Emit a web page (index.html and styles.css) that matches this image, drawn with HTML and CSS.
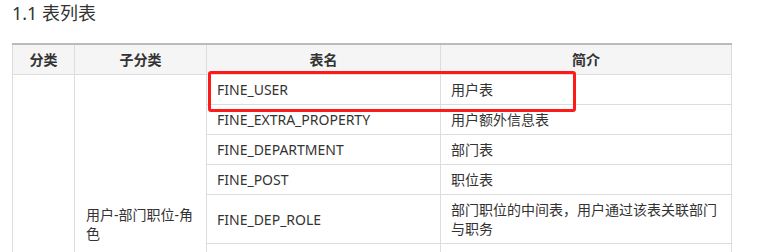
FILE: index.html
```html
<!DOCTYPE html>
<html lang="zh-CN">
<head>
<meta charset="utf-8">
<title>1.1 表列表</title>
<link rel="stylesheet" href="styles.css">
</head>
<body>
<div class="page">
  <h2 class="title">1.1 表列表</h2>
  <div class="table-wrap">
    <table class="tbl">
      <colgroup>
        <col class="c1"><col class="c2"><col class="c3"><col class="c4">
      </colgroup>
      <thead>
        <tr><th>分类</th><th>子分类</th><th>表名</th><th>简介</th></tr>
      </thead>
      <tbody>
        <tr>
          <td rowspan="12" class="cat"></td>
          <td rowspan="9" class="sub">用户-部门职位-角色</td>
          <td>FINE_USER</td><td>用户表</td>
        </tr>
        <tr><td>FINE_EXTRA_PROPERTY</td><td>用户额外信息表</td></tr>
        <tr><td>FINE_DEPARTMENT</td><td>部门表</td></tr>
        <tr><td>FINE_POST</td><td>职位表</td></tr>
        <tr><td>FINE_DEP_ROLE</td><td>部门职位的中间表，用户通过该表关联部门与职务</td></tr>
        <tr class="spaced"><td>FINE_USER_ROLE_MIDDLE</td><td>用户与角色的中间表</td></tr>
        <tr><td>FINE_CUSTOM_ROLE</td><td>自定义角色表</td></tr>
        <tr><td>FINE_SOFT_DATA</td><td>软删除数据表</td></tr>
        <tr><td>FINE_USER_ROLE</td><td>用户角色表</td></tr>
        <tr>
          <td rowspan="3" class="sub">权限</td>
          <td>FINE_AUTHORITY</td><td>权限表</td>
        </tr>
        <tr><td>FINE_AUTHORITY_OBJECT</td><td>权限实体表</td></tr>
        <tr><td>FINE_AUTH_PREFERENCE</td><td>权限偏好表</td></tr>
      </tbody>
    </table>
    <div class="highlight"></div>
  </div>
</div>
</body>
</html>
```
FILE: styles.css
```css
html, body {
  margin: 0;
  padding: 0;
  background: #ffffff;
}
body {
  font-family: "Noto Sans", "Noto Sans CJK SC", sans-serif;
  color: #333333;
}
.page {
  padding: 0 0 0 12px;
}
.title {
  margin: 0;
  padding-top: 1px;
  font-size: 18px;
  line-height: 24px;
  font-weight: normal;
  color: #333333;
}
.table-wrap {
  position: relative;
  margin-top: 18px;
  width: 719px;
}
.tbl {
  border-collapse: collapse;
  table-layout: fixed;
  width: 719px;
  font-size: 14px;
  line-height: 19px;
  border-top: 2px solid #bbbbbb;
}
.c1 { width: 62px; }
.c2 { width: 132px; }
.c3 { width: 234px; }
.c4 { width: 291px; }
.tbl th,
.tbl td {
  border: 1px solid #dddddd;
  padding: 5px 10px;
  text-align: left;
  vertical-align: middle;
}
.tbl th {
  background: #f5f5f5;
  text-align: center;
  font-weight: bold;
  border-top: 2px solid #bbbbbb;
}
.tbl td.sub {
  padding-left: 11px;
}
.tbl tr.spaced td {
  padding-top: 10px;
  padding-bottom: 10px;
}
.highlight {
  position: absolute;
  left: 196px;
  top: 28px;
  width: 362px;
  height: 35px;
  border: 3px solid #ff1a1a;
  border-radius: 3px;
}
```
